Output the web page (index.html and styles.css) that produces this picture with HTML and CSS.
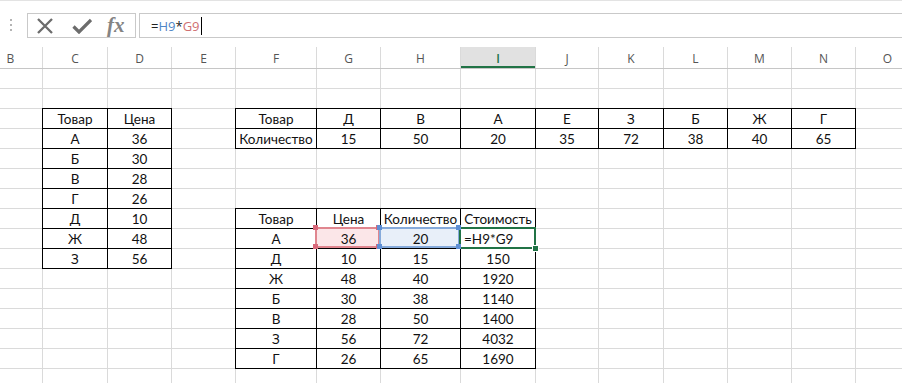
FILE: index.html
```html
<!DOCTYPE html>
<html lang="ru">
<head>
<meta charset="utf-8">
<title>Книга1 - Excel</title>
<link rel="stylesheet" href="styles.css">
</head>
<body>
<div class="app">
  <div class="formula-bar">
    <svg class="grip" width="4" height="14" viewBox="0 0 4 14"><rect x="1" y="0" width="2" height="2"/><rect x="1" y="5" width="2" height="2"/><rect x="1" y="10" width="2" height="2"/></svg>
    <div class="fx-buttons">
      <svg class="ico-x" width="18" height="16" viewBox="0 0 18 16"><path d="M2 1 L16 15 M16 1 L2 15"/></svg>
      <svg class="ico-check" width="20" height="16" viewBox="0 0 20 16"><path d="M1.5 8.5 L7 14 L19 2"/></svg>
      <span class="fx">fx</span>
    </div>
    <div class="formula-input"><span>=</span><span class="f-blue">H9</span><span>*</span><span class="f-red">G9</span><span class="caret"></span></div>
  </div>

  <div class="col-headers">
    <div class="ch w64">B</div>
    <div class="ch w65">C</div>
    <div class="ch w64">D</div>
    <div class="ch w64">E</div>
    <div class="ch w81">F</div>
    <div class="ch w64">G</div>
    <div class="ch w80">H</div>
    <div class="ch w75 sel">I</div>
    <div class="ch w63">J</div>
    <div class="ch w65">K</div>
    <div class="ch w64">L</div>
    <div class="ch w64">M</div>
    <div class="ch w64">N</div>
    <div class="ch w64">O</div>
  </div>

  <div class="sheet">
    <div class="gridlines">
      <div class="vl w64"></div>
      <div class="vl w65"></div>
      <div class="vl w64"></div>
      <div class="vl w64"></div>
      <div class="vl w81"></div>
      <div class="vl w64"></div>
      <div class="vl w80"></div>
      <div class="vl w75"></div>
      <div class="vl w63"></div>
      <div class="vl w65"></div>
      <div class="vl w64"></div>
      <div class="vl w64"></div>
      <div class="vl w64"></div>
      <div class="vl w64"></div>
    </div>

    <div class="tbl t1">
      <div class="c">Товар</div><div class="c">Цена</div>
      <div class="c">А</div><div class="c">36</div>
      <div class="c">Б</div><div class="c">30</div>
      <div class="c">В</div><div class="c">28</div>
      <div class="c">Г</div><div class="c">26</div>
      <div class="c">Д</div><div class="c">10</div>
      <div class="c">Ж</div><div class="c">48</div>
      <div class="c">З</div><div class="c">56</div>
    </div>

    <div class="tbl t2">
      <div class="c">Товар</div><div class="c">Д</div><div class="c">В</div><div class="c">А</div><div class="c">Е</div><div class="c">З</div><div class="c">Б</div><div class="c">Ж</div><div class="c">Г</div>
      <div class="c">Количество</div><div class="c">15</div><div class="c">50</div><div class="c">20</div><div class="c">35</div><div class="c">72</div><div class="c">38</div><div class="c">40</div><div class="c">65</div>
    </div>

    <div class="tbl t3">
      <div class="c">Товар</div><div class="c">Цена</div><div class="c">Количество</div><div class="c">Стоимость</div>
      <div class="c">А</div>
      <div class="c hl hl-red">36<i class="k k-tl"></i><i class="k k-tr"></i><i class="k k-bl"></i><i class="k k-br"></i></div>
      <div class="c hl hl-blue">20<i class="k k-tl"></i><i class="k k-tr"></i><i class="k k-bl"></i><i class="k k-br"></i></div>
      <div class="c active">=H9*G9<i class="handle"></i></div>
      <div class="c">Д</div><div class="c">10</div><div class="c">15</div><div class="c">150</div>
      <div class="c">Ж</div><div class="c">48</div><div class="c">40</div><div class="c">1920</div>
      <div class="c">Б</div><div class="c">30</div><div class="c">38</div><div class="c">1140</div>
      <div class="c">В</div><div class="c">28</div><div class="c">50</div><div class="c">1400</div>
      <div class="c">З</div><div class="c">56</div><div class="c">72</div><div class="c">4032</div>
      <div class="c">Г</div><div class="c">26</div><div class="c">65</div><div class="c">1690</div>
    </div>
  </div>
</div>
</body>
</html>
```

FILE: styles.css
```css
* { box-sizing: border-box; }

html, body {
  margin: 0;
  padding: 0;
  background: #fff;
  overflow: hidden;
}

body {
  width: 902px;
  height: 383px;
}

.app {
  width: 902px;
  height: 383px;
  overflow: hidden;
  background: #fff;
}

/* ---------- formula bar ---------- */
.formula-bar {
  height: 47px;
  display: flex;
  align-items: flex-start;
  padding-top: 12px;
  border-top: 1px solid #e3e3e3;
}

.grip {
  margin-left: 9px;
  margin-top: 6px;
  fill: #b4b4b4;
  flex: none;
}

.fx-buttons {
  flex: none;
  margin-left: 14px;
  width: 109px;
  height: 25px;
  border: 1px solid #c9c9c9;
  display: flex;
  align-items: center;
  padding-left: 8px;
}

.ico-x {
  flex: none;
  stroke: #6c6c6c;
  stroke-width: 2.3;
  fill: none;
}

.ico-check {
  flex: none;
  margin-left: 18px;
  stroke: #6c6c6c;
  stroke-width: 3.2;
  fill: none;
}

.fx {
  flex: none;
  margin-left: 15px;
  font-family: "Liberation Serif", "DejaVu Serif", serif;
  font-style: italic;
  font-weight: bold;
  font-size: 21px;
  line-height: 20px;
  color: #848484;
  margin-top: -1px;
}

.formula-input {
  flex: 1;
  margin-left: 3px;
  height: 25px;
  border: 1px solid #c9c9c9;
  border-right: none;
  padding-left: 11px;
  display: flex;
  align-items: center;
  font-family: "Open Sans", "Noto Sans", sans-serif;
  font-size: 13px;
  color: #222;
}

.f-blue { color: #4f86c6; }
.f-red { color: #cf6f72; }

.caret {
  display: inline-block;
  width: 1px;
  height: 18px;
  background: #000;
  margin-left: 1px;
}

/* ---------- column headers ---------- */
.col-headers {
  display: flex;
  margin-left: -22px;
  height: 22px;
  border-bottom: 1px solid #c6c6c6;
}

.ch {
  flex: none;
  height: 21px;
  border-left: 1px solid #dadada;
  text-align: center;
  font-family: "Open Sans", "Noto Sans", sans-serif;
  font-size: 12px;
  line-height: 23px;
  color: #555;
}

.ch.sel {
  background: #e1e1e1;
  color: #217346;
  font-weight: 600;
  box-shadow: inset 0 -2px 0 #217346;
}

.w63 { width: 63px; }
.w64 { width: 64px; }
.w65 { width: 65px; }
.w75 { width: 75px; }
.w80 { width: 80px; }
.w81 { width: 81px; }

/* ---------- sheet ---------- */
.sheet {
  margin-left: -22px;
  display: grid;
  grid-template-columns: 64px 65px 64px 64px 81px 64px 80px 75px 63px 65px 64px 64px 64px 64px;
  grid-template-rows: repeat(16, 20px);
}

.gridlines {
  grid-column: 1 / -1;
  grid-row: 1 / -1;
  display: flex;
  background: repeating-linear-gradient(to bottom, transparent 0 19px, #dadada 19px 20px);
}

.vl {
  flex: none;
  height: 100%;
  border-left: 1px solid #dadada;
}

.tbl {
  display: grid;
  align-self: start;
  justify-self: start;
  margin-top: -1px;
  border-left: 1px solid #000;
  border-top: 1px solid #000;
  font-family: Lato, "Liberation Sans", sans-serif;
  font-size: 13.5px;
  color: #111;
}

.t1 {
  grid-column: 2 / 4;
  grid-row: 3 / 11;
  grid-template-columns: 65px 64px;
}

.t2 {
  grid-column: 5 / 14;
  grid-row: 3 / 5;
  grid-template-columns: 81px 64px 80px 75px 63px 65px 64px 64px 64px;
}

.t3 {
  grid-column: 5 / 9;
  grid-row: 8 / 16;
  grid-template-columns: 81px 64px 80px 75px;
}

.c {
  height: 20px;
  border-right: 1px solid #000;
  border-bottom: 1px solid #000;
  background: #fff;
  text-align: center;
  line-height: 20px;
  white-space: nowrap;
}

/* range reference highlights */
.hl { position: relative; }

.hl::before {
  content: "";
  position: absolute;
  top: -2px;
  left: -2px;
  right: 0;
  bottom: 0;
  border: 2px solid var(--hc);
}

.hl-red {
  --hc: #e0868f;
  --kc: #d8687a;
  background: #fbe6e8;
}

.hl-blue {
  --hc: #86aadb;
  --kc: #5f8fd4;
  background: #e8eff9;
}

.k {
  position: absolute;
  width: 5px;
  height: 5px;
  background: var(--kc);
  z-index: 3;
}

.k-tl { top: -4px; left: -4px; }
.k-tr { top: -4px; right: -1px; }
.k-bl { bottom: -1px; left: -4px; }
.k-br { bottom: -1px; right: -1px; }

/* active cell */
.active {
  position: relative;
  text-align: left;
  padding-left: 3px;
}

.active::before {
  content: "";
  position: absolute;
  top: -2px;
  left: -2px;
  right: -1px;
  bottom: -1px;
  border: 2px solid #217346;
  z-index: 2;
}

.handle {
  position: absolute;
  right: -4px;
  bottom: -4px;
  width: 7px;
  height: 7px;
  background: #217346;
  border: 1px solid #fff;
  z-index: 2;
}
```
